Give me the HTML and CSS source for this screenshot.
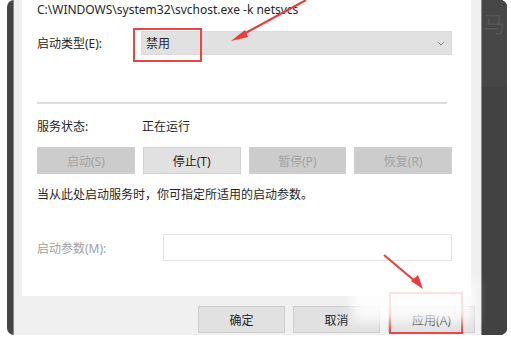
FILE: index.html
```html
<!DOCTYPE html>
<html lang="zh-CN">
<head>
<meta charset="utf-8">
<title>服务属性</title>
<link rel="stylesheet" href="styles.css">
</head>
<body>
<div class="frame">
  <div class="dialog">
    <div class="panel">
      <div class="path">C:\WINDOWS\system32\svchost.exe -k netsvcs</div>
      <div class="row type-row">
        <span class="label">启动类型(E):</span>
        <div class="select">
          <span>禁用</span>
          <svg class="chev" width="8" height="5" viewBox="0 0 8 5"><polyline points="1,1 4,4 7,1" fill="none" stroke="#8a8a8a" stroke-width="1"/></svg>
        </div>
      </div>
      <div class="sep"></div>
      <div class="row status-row">
        <span class="label">服务状态:</span>
        <span class="value">正在运行</span>
      </div>
      <div class="btn-row">
        <div class="btn disabled">启动(S)</div>
        <div class="btn">停止(T)</div>
        <div class="btn disabled">暂停(P)</div>
        <div class="btn disabled">恢复(R)</div>
      </div>
      <p class="hint">当从此处启动服务时，你可指定所适用的启动参数。</p>
      <div class="row param-row">
        <span class="label muted">启动参数(M):</span>
        <div class="input"></div>
      </div>
    </div>
    <div class="footer">
      <div class="btn fbtn">确定</div>
      <div class="btn fbtn">取消</div>
      <div class="btn fbtn">应用(A)</div>
    </div>
  </div>
  <div class="side">
    <span class="ghost">马</span>
  </div>
</div>

<div class="mark mark-type"></div>
<div class="mark mark-apply"></div>
<div class="blur"></div>
<svg class="arrows" width="511" height="341" viewBox="0 0 511 341">
  <line x1="306" y1="0" x2="240" y2="36" stroke="#ec3b3b" stroke-width="2"/>
  <polygon points="231,41 245,30 248,37" fill="#ec3b3b"/>
  <line x1="384" y1="255" x2="416" y2="282" stroke="#ec3b3b" stroke-width="2"/>
  <polygon points="423,289 411,281 418,275" fill="#ec3b3b"/>
</svg>
</body>
</html>
```

FILE: styles.css
```css
html, body {
  margin: 0;
  padding: 0;
  background: #ffffff;
}
body {
  width: 511px;
  height: 341px;
  overflow: hidden;
  position: relative;
  font-family: "Noto Sans", "Noto Sans CJK SC", sans-serif;
  font-size: 12px;
  color: #262626;
}
.frame {
  margin: 0 0 0 7px;
  width: 500px;
  height: 335px;
  background: #464646;
  border-radius: 7px;
  display: flex;
  overflow: hidden;
}
.dialog {
  margin-left: 6px;
  width: 467px;
  border-left: 1px solid #3f9be2;
  border-right: 1px solid #3f9be2;
  background: #f0f0f0;
  display: flex;
  flex-direction: column;
}
.panel {
  margin: 0 10px 0 8px;
  height: 296px;
  background: #ffffff;
  padding: 0 19px 0 15px;
  box-sizing: border-box;
}
.path {
  height: 14px;
  line-height: 14px;
  padding-top: 3px;
  font-size: 12px;
  white-space: nowrap;
}
.row {
  display: flex;
  align-items: center;
}
.type-row {
  margin-top: 14px;
  height: 24px;
}
.label {
  width: 104px;
  flex: none;
}
.select {
  flex: 1;
  height: 24px;
  box-sizing: border-box;
  background: #e1e1e1;
  border: 1px solid #dadada;
  display: flex;
  align-items: center;
  justify-content: space-between;
  padding: 0 6px 0 4px;
}
.sep {
  margin-top: 47px;
  height: 2px;
  background: #dedede;
  margin-right: 5px;
}
.status-row {
  margin-top: 14px;
  height: 16px;
}
.value {
  margin-left: 1px;
}
.btn-row {
  margin-top: 13px;
  display: flex;
  gap: 8px;
}
.btn {
  height: 27px;
  box-sizing: border-box;
  background: #e1e1e1;
  border: 1px solid #d2d2d2;
  display: flex;
  align-items: center;
  justify-content: center;
  flex: 1;
  color: #1e1e1e;
}
.btn.disabled {
  background: #cccccc;
  border-color: #cfcfcf;
  color: #a3a3a3;
}
.hint {
  margin: 13px 0 0;
  height: 16px;
  line-height: 16px;
  white-space: nowrap;
}
.param-row {
  margin-top: 31px;
  height: 27px;
}
.label.muted {
  color: #a0a0a0;
  width: 126px;
}
.input {
  flex: 1;
  height: 27px;
  box-sizing: border-box;
  border: 1px solid #e3e3e3;
  background: #ffffff;
}
.footer {
  display: flex;
  justify-content: flex-end;
  gap: 8px;
  padding: 10px 6px 0 0;
}
.fbtn {
  flex: none;
  width: 87px;
  border-color: #cdcdcd;
}
.side {
  flex: 1;
  position: relative;
  border-top: 87px solid #474747;
  background: #424242;
}
.ghost {
  position: absolute;
  top: -80px;
  left: 1px;
  font-size: 22px;
  line-height: 30px;
  color: #565656;
  white-space: nowrap;
  font-family: "Noto Sans CJK SC", sans-serif;
}
.mark {
  position: absolute;
  border: 2px solid #ea4444;
  box-sizing: border-box;
}
.mark-type {
  left: 133px;
  top: 28px;
  width: 69px;
  height: 34px;
}
.mark-apply {
  left: 389px;
  top: 292px;
  width: 74px;
  height: 42px;
}
.blur {
  position: absolute;
  left: 352px;
  top: 280px;
  width: 122px;
  height: 42px;
  background: rgba(255, 255, 255, 0.85);
  filter: blur(6px);
}
.arrows {
  position: absolute;
  left: 0;
  top: 0;
}
```
